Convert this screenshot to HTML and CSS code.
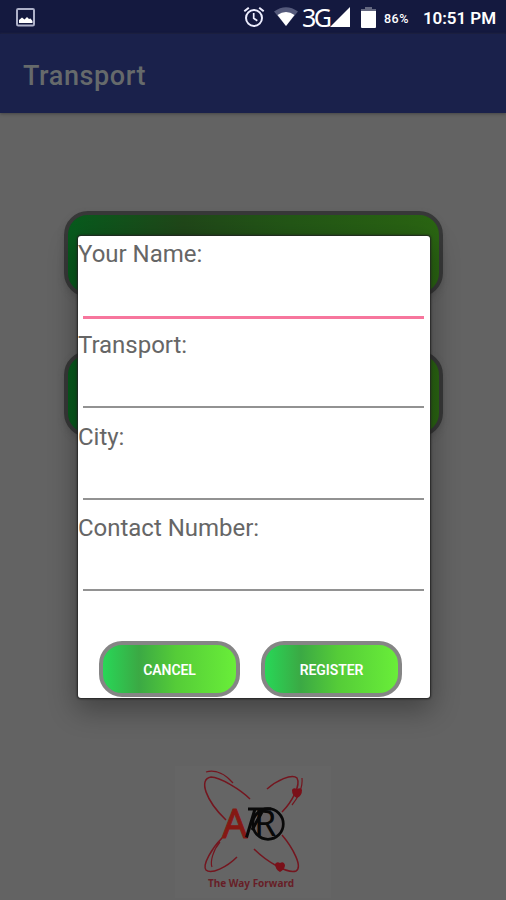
FILE: index.html
```html
<!DOCTYPE html>
<html lang="en">
<head>
<meta charset="utf-8">
<title>Transport</title>
<link rel="stylesheet" href="styles.css">
</head>
<body>
<div class="screen">
  <header class="status">
    <svg class="photo" width="19" height="19" viewBox="0 0 19 19"><rect x="1" y="1" width="17" height="16.5" rx="1.2" fill="none" stroke="#aeb1c9" stroke-width="2"/><path d="M3 15V12L6 9.5L8.5 11.5L11 9L13 11L14.5 10.5L16.5 13V15Z" fill="#fff"/></svg>
    <svg class="alarm" width="22" height="22" viewBox="0 0 22 22" fill="none" stroke="#eef" stroke-width="2"><circle cx="11" cy="12" r="8"/><path d="M1.3 5.3L5.8 1.7M20.7 5.3L16.2 1.7"/><path d="M10.7 7V12.3L14.3 14.8" stroke-width="1.7"/></svg>
    <svg class="wifi" width="24" height="20" viewBox="0 0 24 20"><path d="M0 4.5Q12-4 24 4.5L12 19Z" fill="#555a7b"/><path d="M3.5 8Q12 2 20.5 8L12 19Z" fill="#fff"/></svg>
    <span class="network">3G</span>
    <svg class="signal" width="20" height="20" viewBox="0 0 20 20"><path d="M0 20L20 0V20Z" fill="#fff"/></svg>
    <svg class="battery" width="15" height="21" viewBox="0 0 15 21"><path d="M4 0H11V2H15V5H0V2H4Z" fill="#646880"/><path d="M0 4H15V20Q15 21 14 21H1Q0 21 0 20Z" fill="#fff"/></svg>
    <span class="percent">86%</span>
    <span class="time">10:51 PM</span>
  </header>
  <div class="appbar"><h1>Transport</h1></div>
  <main class="page">
    <div class="choice"></div>
    <div class="choice"></div>
    <div class="brand">
      <svg width="156" height="132" viewBox="0 0 156 132">
        <g fill="none" stroke="#74161f" stroke-width="1.5">
          <path d="M75 33C66 24 45 11 36 11C23 13 31 35 51 54"/>
          <path d="M31 6C41 3 51 9 58 17" stroke-width="1.2"/>
          <path d="M92 23C101 15 117 7 122 12C126 19 117 36 107 46"/>
          <path d="M127 12C128 21 123 32 117 39" stroke-width="1.2"/>
          <path d="M47 72C37 82 27 99 31 104C36 109 52 101 62 91"/>
          <path d="M45 76C38 84 35 96 37 101" stroke-width="1.2"/>
          <path d="M107 69C118 82 128 101 121 105C113 108 92 96 79 83"/>
        </g>
        <path d="M117 24Q118 21 122 23Q126 21 127 24Q127 30 122 32Q117 30 117 24ZM100 98Q102 95 105 97Q109 95 110 99Q110 103 105 106Q100 103 100 98Z" fill="#7a1019"/>
        <circle cx="93" cy="58" r="15.3" fill="#625f61" stroke="#090909" stroke-width="2.7"/>
        <text class="letter-a" x="47" y="71.5">A</text>
        <path d="M73 43H96M80 43L71.5 71.5M87 46L77 64" fill="none" stroke="#090909" stroke-width="3"/>
        <text class="letter-r" x="79" y="69.5">R</text>
        <text class="motto" x="33" y="120.5" textLength="86" lengthAdjust="spacingAndGlyphs">The Way Forward</text>
      </svg>
    </div>
  </main>
  <form class="dialog">
    <div class="field active"><label for="name">Your Name:</label><input id="name"></div>
    <div class="field"><label for="transport">Transport:</label><input id="transport"></div>
    <div class="field"><label for="city">City:</label><input id="city"></div>
    <div class="field"><label for="contact">Contact Number:</label><input id="contact"></div>
    <div class="actions"><button type="button">CANCEL</button><button type="button">REGISTER</button></div>
  </form>
</div>
</body>
</html>
```
FILE: styles.css
```css
* { box-sizing: border-box; }
body { margin: 0; font-family: Roboto, sans-serif; }
.screen { position: relative; width: 506px; height: 900px; overflow: hidden; background: #636363; }
.status { height: 34px; display: flex; align-items: center; padding: 0 10px 0 16px; background: #14193f; color: #fff; white-space: nowrap; }
.status svg { flex: none; }
.alarm { margin-left: 208px; }
.wifi { margin-left: 9px; }
.network { width: 26px; margin-left: 4px; font: 25px/34px "Noto Sans", sans-serif; letter-spacing: -2.6px; }
.signal { margin-left: 2px; }
.battery { margin-left: 11px; }
.percent { width: 27px; margin-left: 8px; margin-top: 2px; font-size: 12.5px; font-weight: 500; letter-spacing: .5px; }
.time { margin-left: auto; padding-top: 2px; font-size: 17px; font-weight: 600; letter-spacing: -.05px; }
.appbar { height: 79px; padding: 0 23px; display: flex; align-items: center; background: #1a214b; box-shadow: 0 1px 3px #444; }
h1 { margin: 4px 0 0; font-size: 27px; line-height: 34px; font-weight: 500; color: #666a6b; letter-spacing: .6px; }
.page { display: flex; flex-direction: column; align-items: center; padding-top: 98px; }
.choice { width: 379px; height: 86px; margin-bottom: 54px; border: 4px solid #373838; border-radius: 24px; background: linear-gradient(90deg, #075b1d 0%, #204719 31%, #235716 60%, #2a6512 100%); box-shadow: 0 3px 6px #4446; }
.brand { width: 156px; height: 132px; margin-top: 275px; background: #656565; }
.brand svg { display: block; }
.letter-a { font: 40px "Noto Sans", sans-serif; fill: #851813; stroke: #851813; stroke-width: .9px; }
.letter-r { font: 36px "Noto Sans", sans-serif; fill: #090909; }
.motto { font: bold 10px "Noto Sans", sans-serif; fill: #671e27; }
.dialog { position: absolute; left: 78px; top: 236px; width: 352px; height: 462px; background: #fff; border-radius: 3px; box-shadow: 0 0 2px 1px #222, 0 10px 28px 2px #0005; }
.field { height: 91.3px; padding-top: 3px; }
.field label { display: block; color: #666; font-size: 24px; line-height: 30px; letter-spacing: -.02px; }
.field input { display: block; width: 341px; height: 49px; margin-left: 5px; padding: 0 4px; border: 0; border-bottom: 2px solid #929292; background: none; outline: 0; font: 24px Roboto, sans-serif; }
.field:not(.active) input { height: 48px; }
.active input { border-bottom: 3px solid #f7769d; height: 50px; }
.actions { display: flex; gap: 21px; padding: 40px 0 0 21px; }
button { width: 141px; height: 56px; padding: 2px 0 0; border: 4px solid #858585; border-radius: 23px; background: linear-gradient(90deg, #28d757 0%, #3ba944 27%, #55cc38 55%, #69ee39 100%); color: #fff; font: 600 14px Roboto, sans-serif; letter-spacing: -.1px; }
```
